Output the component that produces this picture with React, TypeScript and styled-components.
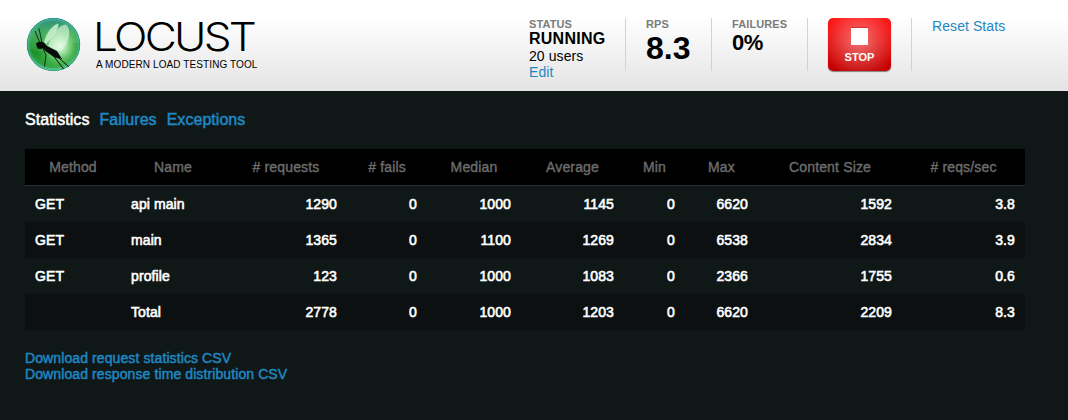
import React from "react";
import styled, { createGlobalStyle } from "styled-components";

const GlobalStyle = createGlobalStyle`
  body {
    margin: 0;
    background: #101817;
    color: #fff;
    font: 14px/16px Arial, "Liberation Sans", sans-serif;
  }
`;

const Page = styled.div`
  min-height: 420px;
  box-sizing: border-box;
`;

const TopBar = styled.header`
  display: flex;
  align-items: flex-start;
  justify-content: space-between;
  height: 91px;
  box-sizing: border-box;
  padding: 18px 63px 0 26px;
  background: linear-gradient(#ffffff 0%, #ffffff 18%, #e4e4e4 100%);
  color: #000;
`;

const Brand = styled.div`
  display: flex;
  gap: 15px;
`;

const LogoMark = styled.svg`
  display: block;
  width: 55px;
  height: 55px;
  margin-top: -1px;
`;

const BrandText = styled.div`
  display: flex;
  flex-direction: column;
  white-space: nowrap;
`;

const Wordmark = styled.div`
  width: 150px;
  margin-left: -3px;
  font-family: Inter, "Liberation Sans", sans-serif;
  font-weight: 300;
  font-size: 39px;
  line-height: 38px;
  letter-spacing: -2.4px;
  transform: scaleX(1.13);
  transform-origin: left center;
`;

const Tagline = styled.div`
  font-size: 10px;
  line-height: 12px;
  margin-top: 3px;
  letter-spacing: 0.1px;
`;

const Boxes = styled.div`
  display: flex;
`;

const Box = styled.div<{ $width: number; $last?: boolean }>`
  width: ${(p) => p.$width}px;
  height: 53px;
  box-sizing: border-box;
  padding-left: 20px;
  border-right: ${(p) => (p.$last ? "none" : "1px solid #d3d3d3")};
  white-space: nowrap;
  letter-spacing: 0.08px;
`;

const Label = styled.div`
  color: #7b7b7b;
  font-size: 11px;
  font-weight: bold;
  line-height: 12px;
  letter-spacing: 0.1px;
`;

const Value = styled.div<{ $size: number; $line: number; $track: number }>`
  font-size: ${(p) => p.$size}px;
  line-height: ${(p) => p.$line}px;
  letter-spacing: ${(p) => p.$track}px;
  font-weight: bold;
`;

const Link = styled.a`
  color: #1f88c4;
  text-decoration: none;
  cursor: pointer;
`;

const StopButton = styled.button`
  display: flex;
  flex-direction: column;
  align-items: center;
  width: 63px;
  height: 53px;
  padding: 10px 0 0;
  border: 0;
  border-radius: 5px;
  background:
    radial-gradient(circle 38px at 50% 42%, rgba(255, 255, 255, 0.43), rgba(255, 255, 255, 0) 100%),
    linear-gradient(#ff0d0d, #c20000);
  box-shadow: 0 1px 1px rgba(0, 0, 0, 0.45);
  color: #fff;
  font: bold 11px/12px Arial, "Liberation Sans", sans-serif;
`;

const StopSquare = styled.span`
  width: 17px;
  height: 17px;
  margin-bottom: 6px;
  background: #fff;
  box-shadow: 0 -1px 0 rgba(120, 0, 0, 0.35);
`;

const Content = styled.main`
  width: 1000px;
  padding: 19px 0 0 25px;
  letter-spacing: 0.1px;
`;

const Tabs = styled.nav`
  display: flex;
  gap: 10px;
  font-size: 16px;
  line-height: 20px;
  margin-bottom: 19px;
  letter-spacing: 0.04px;
`;

const Tab = styled.a<{ $active?: boolean }>`
  color: ${(p) => (p.$active ? "#fff" : "#1f88c4")};
  -webkit-text-stroke: 0.5px currentColor;
`;

const Table = styled.table`
  width: 1000px;
  table-layout: fixed;
  border-collapse: separate;
  border-spacing: 0;
`;

const HeadCell = styled.th<{ $width: number }>`
  width: ${(p) => p.$width}px;
  height: 37px;
  box-sizing: border-box;
  padding: 0;
  background: #000;
  border-bottom: 1px solid #2b3231;
  color: #6c6c6c;
  font-weight: normal;
  letter-spacing: 0.15px;
  -webkit-text-stroke: 0.4px currentColor;
`;

const Row = styled.tr`
  &:nth-child(even) {
    background: #0c1010;
  }
`;

const Cell = styled.td<{ $text?: boolean }>`
  height: 36px;
  box-sizing: border-box;
  padding: 0 10px;
  text-align: ${(p) => (p.$text ? "left" : "right")};
  -webkit-text-stroke: 0.6px currentColor;
`;

const Downloads = styled.div`
  display: flex;
  flex-direction: column;
  align-items: flex-start;
  margin-top: 20px;
  -webkit-text-stroke: 0.45px currentColor;
`;

const columns: [string, number][] = [
  ["Method", 96],
  ["Name", 104],
  ["# requests", 122],
  ["# fails", 80],
  ["Median", 94],
  ["Average", 103],
  ["Min", 61],
  ["Max", 73],
  ["Content Size", 144],
  ["# reqs/sec", 123],
];

const rows = [
  ["GET", "api main", "1290", "0", "1000", "1145", "0", "6620", "1592", "3.8"],
  ["GET", "main", "1365", "0", "1100", "1269", "0", "6538", "2834", "3.9"],
  ["GET", "profile", "123", "0", "1000", "1083", "0", "2366", "1755", "0.6"],
  ["", "Total", "2778", "0", "1000", "1203", "0", "6620", "2209", "8.3"],
];

function LocustLogo() {
  return (
    <LogoMark viewBox="0 0 55 55">
      <defs>
        <linearGradient id="ball" x1="0" y1="0" x2="0" y2="1">
          <stop offset="0" stopColor="#2f9080" />
          <stop offset="0.3" stopColor="#46ac5c" />
          <stop offset="0.6" stopColor="#2a9a34" />
          <stop offset="1" stopColor="#5ccc70" />
        </linearGradient>
        <radialGradient id="glow" cx="0.62" cy="0.54" r="0.44">
          <stop offset="0" stopColor="#effff0" />
          <stop offset="0.3" stopColor="#b5f0b4" stopOpacity="0.85" />
          <stop offset="1" stopColor="#4dc050" stopOpacity="0" />
        </radialGradient>
        <radialGradient id="rim" cx="0.5" cy="0.5" r="0.5">
          <stop offset="0.84" stopColor="#3fae9a" stopOpacity="0" />
          <stop offset="0.95" stopColor="#4cbfae" stopOpacity="0.6" />
          <stop offset="1" stopColor="#1a7468" />
        </radialGradient>
        <clipPath id="disc">
          <circle cx="27.5" cy="27.5" r="26.8" />
        </clipPath>
      </defs>
      <g clipPath="url(#disc)">
        <circle cx="27.5" cy="27.5" r="26.8" fill="url(#ball)" />
        <path d="M1 31C10 36 20 35 28 32C39 28 47 24 54 27A27 27 0 0 1 1 31Z" fill="#067a0c" opacity="0.4" />
        <circle cx="27.5" cy="27.5" r="26.8" fill="url(#glow)" />
        <circle cx="27.5" cy="27.5" r="26.8" fill="url(#rim)" />
        <path d="M18 25C20 17 26 8 32 6.500C34 9 28 19 20 27Z" fill="#dcf7e2" opacity="0.75" />
        <path d="M22 29C25 18 33 8 40 7.500C46 12 43 28 35 33.500C30 35 26 32 22 29Z" fill="#e2fae4" opacity="0.6" />
        <path d="M10 27C10.500 25 14 24.500 17 25C19 26 19.500 28 21 29L31 34L35 40.500L34 42L28 40L20 34.500L17 31.500L14 32L11.500 31.500Z" fill="#080d0b" />
        <path d="M14 26L9 14M16 26L13 11.500M17 32L20 38L18.500 49.500" fill="none" stroke="#080d0b" strokeWidth="0.8" />
        <path d="M26 37L38 52.500M31 39L43.500 50.500M30 36L36 42" fill="none" stroke="#080d0b" strokeWidth="1" />
      </g>
    </LogoMark>
  );
}

export default function App() {
  return (
    <Page>
      <GlobalStyle />
      <TopBar>
        <Brand>
          <LocustLogo />
          <BrandText>
            <Wordmark>LOCUST</Wordmark>
            <Tagline>A MODERN LOAD TESTING TOOL</Tagline>
          </BrandText>
        </Brand>
        <Boxes>
          <Box $width={117}>
            <Label>STATUS</Label>
            <Value $size={16} $line={18} $track={0.25}>RUNNING</Value>
            <div>20 users</div>
            <Link>Edit</Link>
          </Box>
          <Box $width={86}>
            <Label>RPS</Label>
            <Value $size={32} $line={36} $track={0}>8.3</Value>
          </Box>
          <Box $width={96}>
            <Label>FAILURES</Label>
            <Value $size={22} $line={25} $track={-0.4}>0%</Value>
          </Box>
          <Box $width={104}>
            <StopButton>
              <StopSquare />
              STOP
            </StopButton>
          </Box>
          <Box $width={93} $last>
            <Link>Reset Stats</Link>
          </Box>
        </Boxes>
      </TopBar>
      <Content>
        <Tabs>
          <Tab $active>Statistics</Tab>
          <Tab>Failures</Tab>
          <Tab>Exceptions</Tab>
        </Tabs>
        <Table>
          <thead>
            <tr>
              {columns.map(([title, width]) => (
                <HeadCell key={title} $width={width}>{title}</HeadCell>
              ))}
            </tr>
          </thead>
          <tbody>
            {rows.map((row) => (
              <Row key={row[1]}>
                {row.map((value, i) => (
                  <Cell key={i} $text={i < 2}>{value}</Cell>
                ))}
              </Row>
            ))}
          </tbody>
        </Table>
        <Downloads>
          <Link>Download request statistics CSV</Link>
          <Link>Download response time distribution CSV</Link>
        </Downloads>
      </Content>
    </Page>
  );
}
